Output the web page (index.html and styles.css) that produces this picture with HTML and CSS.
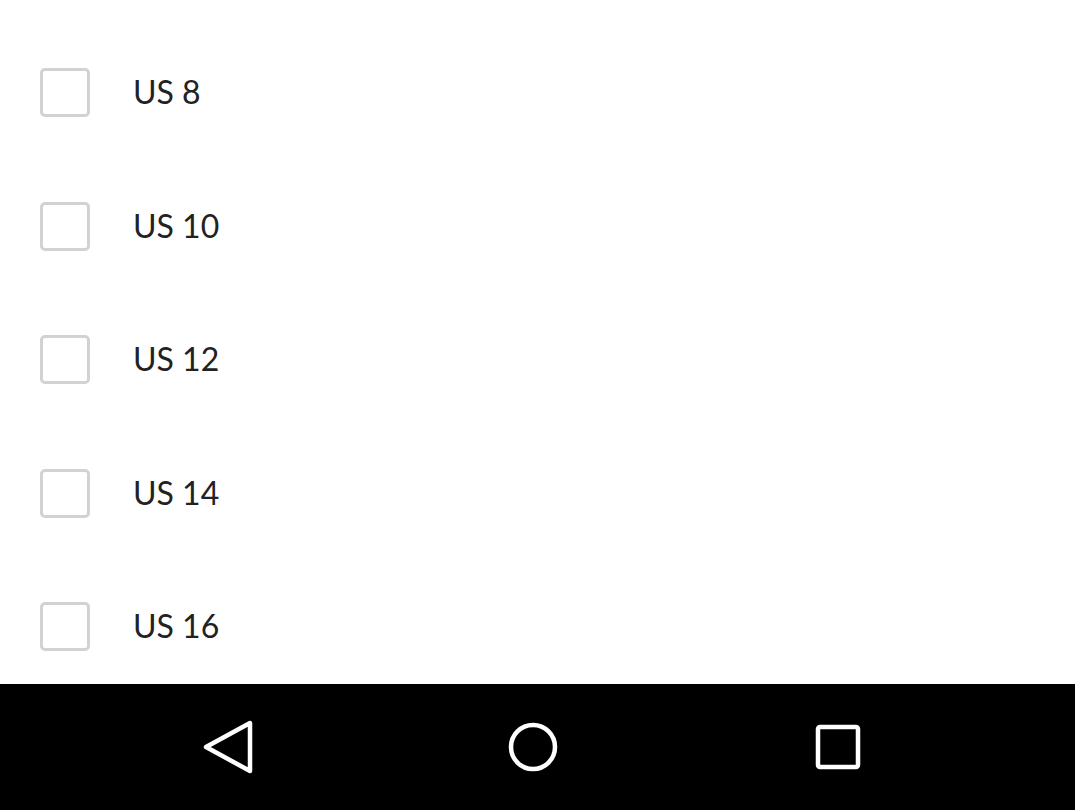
FILE: index.html
```html
<!DOCTYPE html>
<html>
<head>
<meta charset="utf-8">
<link rel="stylesheet" href="styles.css">
</head>
<body>
<div class="screen">
  <ul class="list">
    <li class="row"><span class="box"></span><span class="label">US 8</span></li>
    <li class="row"><span class="box"></span><span class="label">US 10</span></li>
    <li class="row"><span class="box"></span><span class="label">US 12</span></li>
    <li class="row"><span class="box"></span><span class="label">US 14</span></li>
    <li class="row"><span class="box"></span><span class="label">US 16</span></li>
  </ul>
  <nav class="navbar">
    <svg class="nav-icon" width="60" height="60" viewBox="0 0 60 60"><path d="M52 6 L52 54 L8 30 Z" fill="none" stroke="#fff" stroke-width="4.5" stroke-linejoin="round"/></svg>
    <svg class="nav-icon" width="60" height="60" viewBox="0 0 60 60"><circle cx="30" cy="30" r="22" fill="none" stroke="#fff" stroke-width="4.5"/></svg>
    <svg class="nav-icon" width="60" height="60" viewBox="0 0 60 60"><rect x="10" y="10" width="40" height="40" rx="2" fill="none" stroke="#fff" stroke-width="4.5"/></svg>
  </nav>
</div>
</body>
</html>
```
FILE: styles.css
```css
html, body {
  margin: 0;
  padding: 0;
  background: #fff;
}
.screen {
  width: 1075px;
  height: 810px;
  display: flex;
  flex-direction: column;
  overflow: hidden;
}
.list {
  list-style: none;
  margin: 0;
  padding: 26px 0 0 0;
  flex: 1;
  overflow: hidden;
  background: #fff;
}
.row {
  height: 133.5px;
  display: flex;
  align-items: center;
  padding-left: 40px;
  box-sizing: border-box;
}
.box {
  width: 50px;
  height: 49px;
  box-sizing: border-box;
  border: 3px solid #d2d2d2;
  border-radius: 5px;
  flex: none;
}
.label {
  margin-left: 43px;
  font-family: "Lato", "Open Sans", sans-serif;
  font-size: 32px;
  color: #222;
  margin-top: -2px;
}
.navbar {
  height: 126px;
  flex: none;
  background: #000;
  display: flex;
  align-items: center;
  justify-content: space-between;
  padding: 0 207px 0 198px;
}
.nav-icon {
  display: block;
}
```
